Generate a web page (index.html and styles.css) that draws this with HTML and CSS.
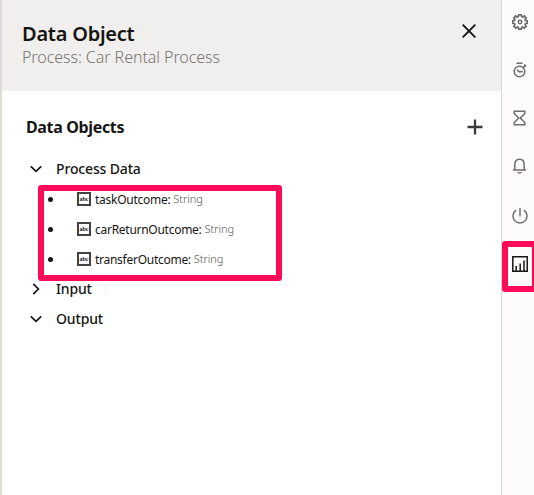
FILE: index.html
```html
<!DOCTYPE html>
<html lang="en">
<head>
<meta charset="utf-8">
<title>Data Object</title>
<link rel="stylesheet" href="styles.css">
</head>
<body>
<div class="app">
  <main class="panel">
    <header class="panel-header">
      <div>
        <h1 class="title">Data Object</h1>
        <p class="subtitle">Process: Car Rental Process</p>
      </div>
      <button class="icon-button close" aria-label="Close">
        <svg width="14" height="14" viewBox="0 0 14 14"><path d="M.7.7l12.6 12.6M13.3.7.7 13.3" stroke="#161513" stroke-width="1.9"/></svg>
      </button>
    </header>
    <section class="content">
      <div class="section-heading">
        <h2>Data Objects</h2>
        <button class="icon-button" aria-label="Add">
          <svg width="16" height="16" viewBox="0 0 16 16"><path d="M8 .5v15M.5 8h15" stroke="#3a3938" stroke-width="2.3"/></svg>
        </button>
      </div>
      <div class="tree">
        <div class="group"><svg class="chevron" width="12" height="12" viewBox="0 0 12 12"><path d="M.8 3.3 6 8.4l5.2-5.1"/></svg><span class="label">Process Data</span></div>
        <ul class="items">
          <li><i class="dot"></i><span class="type">abc</span><span class="name">taskOutcome:</span><span class="kind">String</span></li>
          <li><i class="dot"></i><span class="type">abc</span><span class="name">carReturnOutcome:</span><span class="kind">String</span></li>
          <li><i class="dot"></i><span class="type">abc</span><span class="name">transferOutcome:</span><span class="kind">String</span></li>
        </ul>
        <div class="group"><svg class="chevron" width="12" height="12" viewBox="0 0 12 12"><path d="M3.3.8 8.4 6l-5.1 5.2"/></svg><span class="label">Input</span><span class="count">1</span></div>
        <div class="group"><svg class="chevron" width="12" height="12" viewBox="0 0 12 12"><path d="M.8 3.3 6 8.4l5.2-5.1"/></svg><span class="label">Output</span></div>
        <div class="tree-highlight"></div>
      </div>
    </section>
  </main>
  <nav class="rail">
    <svg width="16" height="16" viewBox="0 0 16 16"><path d="M6.7.8h2.6l.4 1.8 1 .4 1.6-1 1.8 1.8-1 1.6.4 1 1.8.4v2.5l-1.8.4-.4 1 1 1.6-1.8 1.8-1.6-1-1 .4-.4 1.7H6.7l-.4-1.7-1-.4-1.6 1-1.8-1.8 1-1.6-.4-1-1.8-.4V6.8l1.8-.4.4-1-1-1.6L3.7 2l1.6 1 1-.4z" stroke-width="1.8"/><circle cx="8" cy="8" r="1.7"/></svg>
    <svg width="16" height="16" viewBox="0 0 16 16"><circle cx="7.5" cy="9.5" r="5.3"/><path d="M4.5 1.3h6M11 5.7l2.2-2.2M12.2 2.6l1.8 1.8M5 7.8l2.5 2 3.3-.3" stroke-width="1.6"/></svg>
    <svg width="16" height="16" viewBox="0 0 16 16"><path d="M2.2 1.2h10.6v2.3L8.3 8l4.5 4.5v2.3H2.2v-2.3L6.7 8 2.2 3.5z"/></svg>
    <svg width="16" height="16" viewBox="0 0 16 16"><path d="M1 12h13M2.8 11.7V6.8C2.8 3 4.7 1.2 7.5 1.2s4.7 1.8 4.7 5.6v4.9M5.6 14c.7 1.3 3.1 1.3 3.8 0" stroke-width="1.5"/></svg>
    <svg class="power" width="16" height="16" viewBox="0 0 16 16"><path d="M8 0v8.4M4.1 2.2a7 7 0 1 0 7.8 0" stroke-width="1.4"/></svg>
    <div class="active"><svg width="16" height="16" viewBox="0 0 16 16"><path d="M.8.8h14.4v14.4H.8z" stroke-width="1.5"/><path d="M4.2 10v5M8.2 7.5V15M12 4.5V15" stroke-width="1.5"/></svg></div>
    <div class="rail-highlight"></div>
  </nav>
</div>
</body>
</html>
```
FILE: styles.css
```css
* { box-sizing: border-box; }
body { margin: 0; font-family: "Noto Sans", sans-serif; color: #161513; overflow: hidden; }
h1, h2, p, ul { margin: 0; padding: 0; }
.app { display: flex; width: 534px; height: 495px; background: #fff; }
.panel { width: 502px; border-left: 2px solid #dfdcd8; border-right: 1px solid #dcdad7; }
.panel-header { display: flex; justify-content: space-between; height: 91px; padding: 20px 25px 0 20px; background: #f0efed; }
.title { font-size: 20px; line-height: 28px; font-weight: 650; letter-spacing: -.24px; }
.subtitle { font-size: 16px; line-height: 20px; margin-top: -1px; font-weight: 300; color: #777573; letter-spacing: -.06px; }
.icon-button { display: flex; padding: 0; border: 0; background: none; }
.close { height: 14px; margin-top: 4px; }
.content { padding: 21px 18px 0 24px; }
.section-heading { display: flex; align-items: center; justify-content: space-between; height: 30px; }
h2 { font-size: 16px; line-height: 30px; font-weight: 680; letter-spacing: -.35px; }
.tree { position: relative; margin-top: 12px; }
.group { display: flex; align-items: center; height: 30px; padding-left: 4px; font-size: 14px; font-weight: 480; letter-spacing: -.15px; }
.label { margin-top: -1px; }
.chevron { margin-right: 14px; fill: none; stroke: #161513; stroke-width: 1.7; }
.count { margin-left: 10px; color: #f5f5f4; font-size: 12px; }
.items { list-style: none; }
.items li { display: flex; align-items: center; height: 30px; padding-left: 22px; }
.dot { width: 5px; height: 5px; margin-right: 24px; border-radius: 50%; background: #161513; }
.type { display: flex; align-items: center; justify-content: center; width: 14px; height: 14px; margin-right: 4px; border: 2px solid #444240; font: bold 6px/8px "Liberation Serif", serif; }
.name { font-size: 12px; letter-spacing: -.27px; }
.kind { margin: -1px 0 0 3px; font-size: 11px; font-weight: 350; color: #555350; letter-spacing: -.05px; }
.tree-highlight { position: absolute; left: 12px; top: 31px; width: 244px; height: 96px; border: 6px solid #ff0b59; border-radius: 3px; }
.rail { position: relative; display: flex; flex-direction: column; align-items: center; gap: 32px; flex: 1; padding: 14px 0 0 4px; background: #fcfbfa; }
.rail svg { display: block; flex: none; fill: none; stroke: #706e6b; stroke-width: 1.5; }
.rail .power { margin-top: 2px; }
.rail .active svg { stroke: #161513; }
.rail-highlight { position: absolute; left: 0; top: 241px; width: 36px; height: 51px; border: 6px solid #ff0b59; border-radius: 3px; }
```
